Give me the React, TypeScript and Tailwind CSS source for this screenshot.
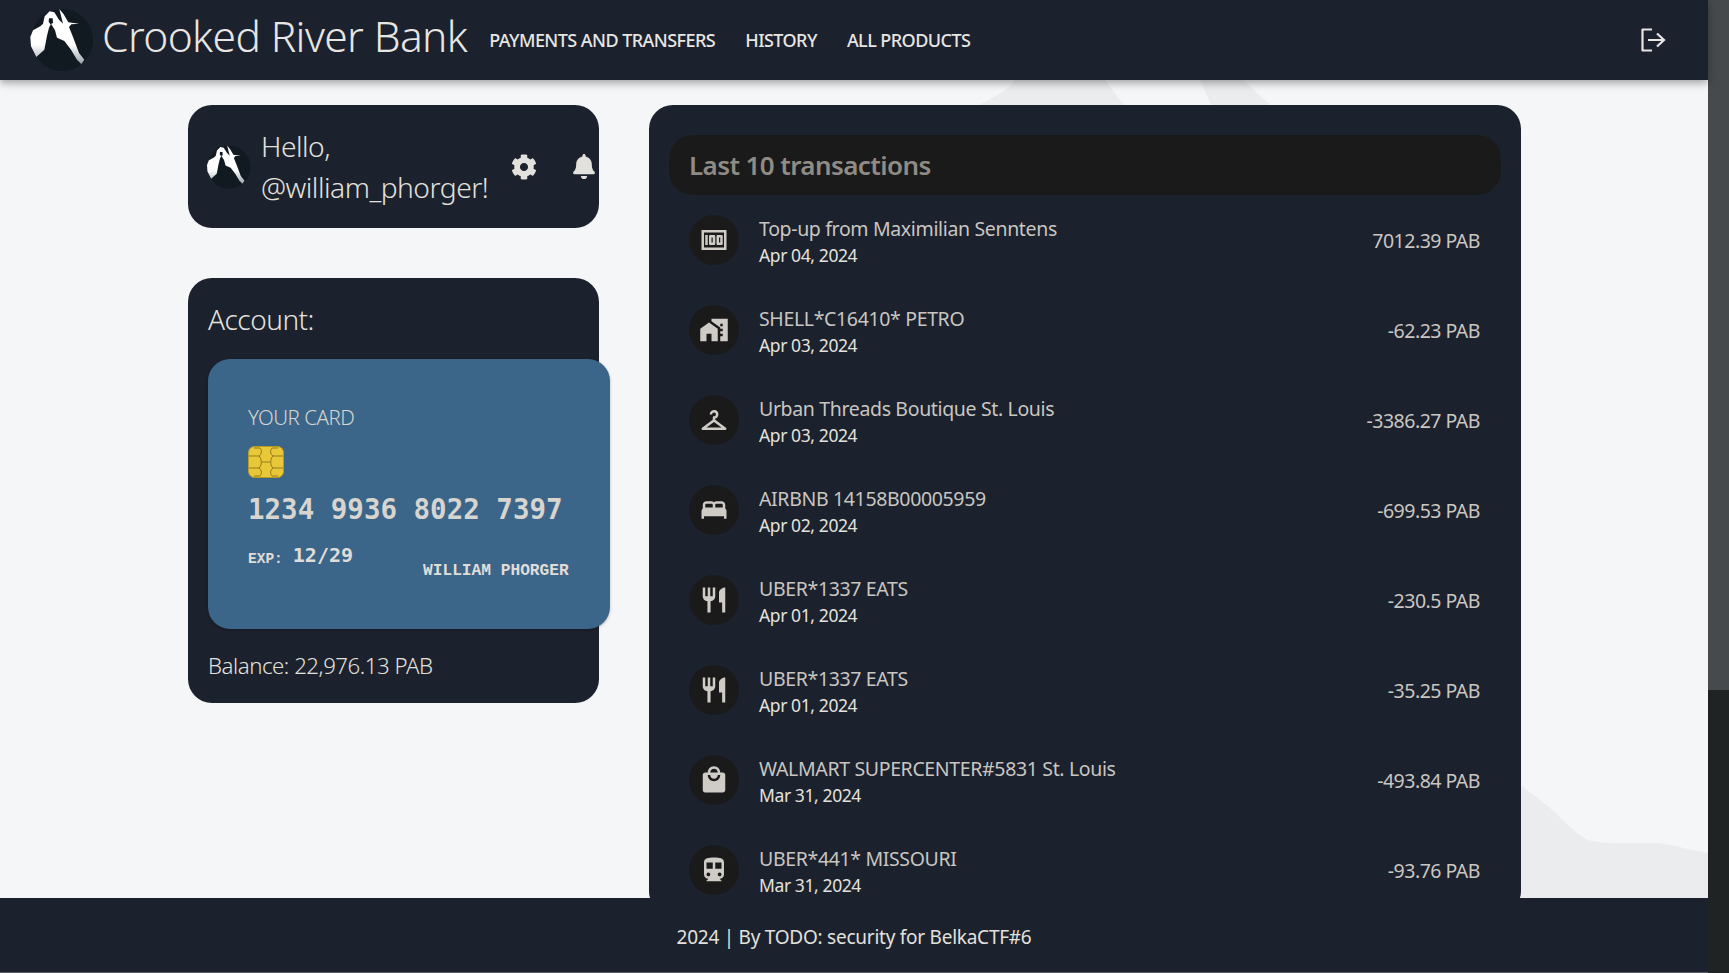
import React from "react";
import { FaCog, FaBell } from "react-icons/fa";
import { MdMoney, MdHomeWork, MdCheckroom, MdBed, MdRestaurant, MdLocalMall, MdDirectionsSubway } from "react-icons/md";

function Logo({ className }: { className: string }) {
  return (
    <svg viewBox="90 28 190 186" className={className}>
      <defs>
        <linearGradient id="lg" x1="0" y1="0" x2="0" y2="1">
          <stop offset="0.65" stopColor="#ffffff" />
          <stop offset="1" stopColor="#9aa4ac" />
        </linearGradient>
      </defs>
      <circle cx="185" cy="121" r="93" fill="#111a21" />
      <path
        fill="url(#lg)"
        d="M90 112 L98 92 L120 80 L128 72 L133 50 L148 35 L162 38 L176 60 L188 72 L177 28 L190 44 L204 68 L236 72 L213 74 L206 82 L218 112 L236 160 L252 180 L243 193 L230 180 L212 150 L192 124 L170 114 L164 92 L152 72 L146 84 L140 108 L132 150 L108 172 L92 140 Z"
      />
      <path fill="#111a21" d="M146 56 L157 56 L158 70 L150 74 L145 66 Z" />
    </svg>
  );
}

const rows = [
  { Icon: MdMoney, title: "Top-up from Maximilian Senntens", date: "Apr 04, 2024", amount: "7012.39 PAB" },
  { Icon: MdHomeWork, title: "SHELL*C16410* PETRO", date: "Apr 03, 2024", amount: "-62.23 PAB" },
  { Icon: MdCheckroom, title: "Urban Threads Boutique St. Louis", date: "Apr 03, 2024", amount: "-3386.27 PAB" },
  { Icon: MdBed, title: "AIRBNB 14158B00005959", date: "Apr 02, 2024", amount: "-699.53 PAB" },
  { Icon: MdRestaurant, title: "UBER*1337 EATS", date: "Apr 01, 2024", amount: "-230.5 PAB" },
  { Icon: MdRestaurant, title: "UBER*1337 EATS", date: "Apr 01, 2024", amount: "-35.25 PAB" },
  { Icon: MdLocalMall, title: "WALMART SUPERCENTER#5831 St. Louis", date: "Mar 31, 2024", amount: "-493.84 PAB" },
  { Icon: MdDirectionsSubway, title: "UBER*441* MISSOURI", date: "Mar 31, 2024", amount: "-93.76 PAB" },
];

export default function App() {
  return (
    <div className="flex h-[973px] w-[1729px] overflow-hidden bg-[#202324] font-['Noto_Sans',sans-serif] text-[#e3e1dd]">
      <div className="flex w-[1708px] flex-col">
        <header className="relative z-10 flex h-[80px] shrink-0 items-center bg-[#1b212d] shadow-[0_3px_8px_rgba(0,0,0,0.35)]">
          <Logo className="ml-[30px] h-[62px] w-[64px] shrink-0" />
          <span className="mb-[8px] ml-[8px] text-[42.5px] font-light tracking-[-0.6px] text-[#e8e6e3]">Crooked River Bank</span>
          <nav className="ml-[22px] flex gap-[30px] text-[18px] font-medium tracking-[-0.55px] text-[#e8e6e3]">
            <span>PAYMENTS AND TRANSFERS</span>
            <span>HISTORY</span>
            <span>ALL PRODUCTS</span>
          </nav>
          <svg viewBox="0 0 26 24" className="ml-auto mr-[42px] h-[24px] w-[26px]" fill="none" stroke="#e8e6e3" strokeWidth="2.2">
            <path d="M12 1.5 H2.5 V22.5 H12" strokeLinejoin="round" />
            <path d="M8 12 H24 M17 5.5 L24 12 L17 18.5" />
          </svg>
        </header>
        <main className="relative flex min-h-0 flex-1 items-start overflow-hidden bg-[#f4f6f8] pl-[188px] pt-[25px]">
          <svg className="absolute left-0 top-0 h-[818px] w-[1708px]" viewBox="0 0 1708 818" fill="#ebecee">
            <path d="M979 25 C995 17 1008 10 1015 0 H1105 L1124 25 Z" />
            <path d="M1200 0 L1211 25 H1270 L1243 0 Z" />
            <path d="M1521 705 L1550 728 C1570 746 1578 757 1592 761 C1605 764 1640 763 1655 763 C1670 764 1690 770 1708 773 V818 H1521 Z" />
          </svg>
          <div className="relative flex w-[411px] shrink-0 flex-col gap-[50px]">
            <section className="flex h-[123px] items-center rounded-[24px] bg-[#1b212d] pl-[19px]">
              <Logo className="h-[44px] w-[44px] shrink-0" />
              <div className="ml-[10px] w-[237px] shrink-0 whitespace-nowrap text-[28.2px] font-light leading-[41px] tracking-[-0.5px] text-[#e3e1dd]">
                Hello,
                <br />
                @william_phorger!
              </div>
              <FaCog className="ml-[13px] h-[26px] w-[26px] shrink-0 text-[#e3e1dd]" />
              <FaBell className="ml-[36px] h-[25px] w-[22px] shrink-0 text-[#e3e1dd]" />
            </section>
            <section className="h-[425px] rounded-[24px] bg-[#1b212d] pl-[20px] pt-[21px]">
              <div className="text-[28px] font-light leading-[41px] tracking-[-0.5px]">Account:</div>
              <div className="relative mt-[19px] flex h-[270px] w-[402px] flex-col rounded-[22px] bg-[#3b6689] pl-[40px] pt-[45px] shadow-[0_1px_3px_rgba(0,0,0,0.25)]">
                <div className="text-[20.5px] font-light leading-[27px] tracking-[-0.5px] text-[#d8d4cf]">YOUR CARD</div>
                <svg viewBox="0 0 36 32" className="mt-[15px] h-[32px] w-[36px]">
                  <rect x="0.5" y="0.5" width="35" height="31" rx="6" fill="#e8c838" stroke="#b89a22" />
                  <path d="M6 2 H12 C14 4 14 8 11 10 H1 M11 10 C14 12 14 20 11 22 H1 M11 22 C14 24 14 28 12 30 H6 M30 2 H24 C22 4 22 8 25 10 H35 M25 10 C22 12 22 20 25 22 H35 M25 22 C22 24 22 28 24 30 H30 M14 16 H22" fill="none" stroke="#947a18" strokeWidth="1" />
                </svg>
                <div className="mt-[13px] font-['DejaVu_Sans_Mono',monospace] text-[27.5px] font-bold leading-[36px] text-[#d8d4cf]">1234 9936 8022 7397</div>
                <div className="mt-[13px] flex items-center font-['Liberation_Mono',monospace] font-bold text-[#e0ddd8]">
                  <span className="mt-[9px] text-[14.5px]">EXP:</span>
                  <span className="ml-[10px] font-['DejaVu_Sans_Mono',monospace] text-[20px]">12/29</span>
                </div>
                <div className="ml-[175px] mt-[-10px] font-['Liberation_Mono',monospace] text-[16.2px] font-bold leading-[20px] text-[#e0ddd8]">WILLIAM PHORGER</div>
              </div>
              <div className="mt-[22px] text-[22.2px] font-light leading-[30px] tracking-[-0.45px]">Balance: 22,976.13 PAB</div>
            </section>
          </div>
          <section className="relative ml-[50px] w-[872px] shrink-0 rounded-[24px] bg-[#1b212d] px-[20px] pt-[30px]">
            <div className="flex h-[60px] items-center rounded-[24px] bg-[#1a1a1a] pl-[20px] text-[26px] font-semibold tracking-[-0.6px] text-[#8f8b85]">
              Last 10 transactions
            </div>
            {rows.map((r, i) => (
              <div key={i} className="flex h-[90px] items-center pl-[20px] pr-[21px]">
                <div className="flex h-[50px] w-[50px] shrink-0 items-center justify-center rounded-full bg-[#1a1a1a]">
                  <r.Icon className="h-[30px] w-[30px] text-[#cfcbc5]" />
                </div>
                <div className="ml-[20px] flex-1 pt-[4px]">
                  <div className="text-[19.5px] leading-[27px] tracking-[-0.35px] text-[#c9c6c1]">{r.title}</div>
                  <div className="text-[17.5px] leading-[27px] tracking-[-0.4px] text-[#e3e1dd]">{r.date}</div>
                </div>
                <div className="pt-[2px] text-[19.5px] tracking-[-0.5px] text-[#c9c6c1]">{r.amount}</div>
              </div>
            ))}
          </section>
        </main>
        <footer className="relative z-10 flex h-[74px] shrink-0 items-center justify-center bg-[#1b212d] pt-[4px] text-[19px] tracking-[-0.25px] text-[#e3e1dd]">
          2024 | By TODO: security for BelkaCTF#6
        </footer>
        <div className="h-px shrink-0 bg-[#5a5e60]" />
      </div>
      <div className="flex w-[21px] shrink-0 flex-col">
        <div className="h-[690px] shrink-0 bg-[#464a4c]" />
        <div className="flex-1 bg-[#202324]" />
      </div>
    </div>
  );
}
